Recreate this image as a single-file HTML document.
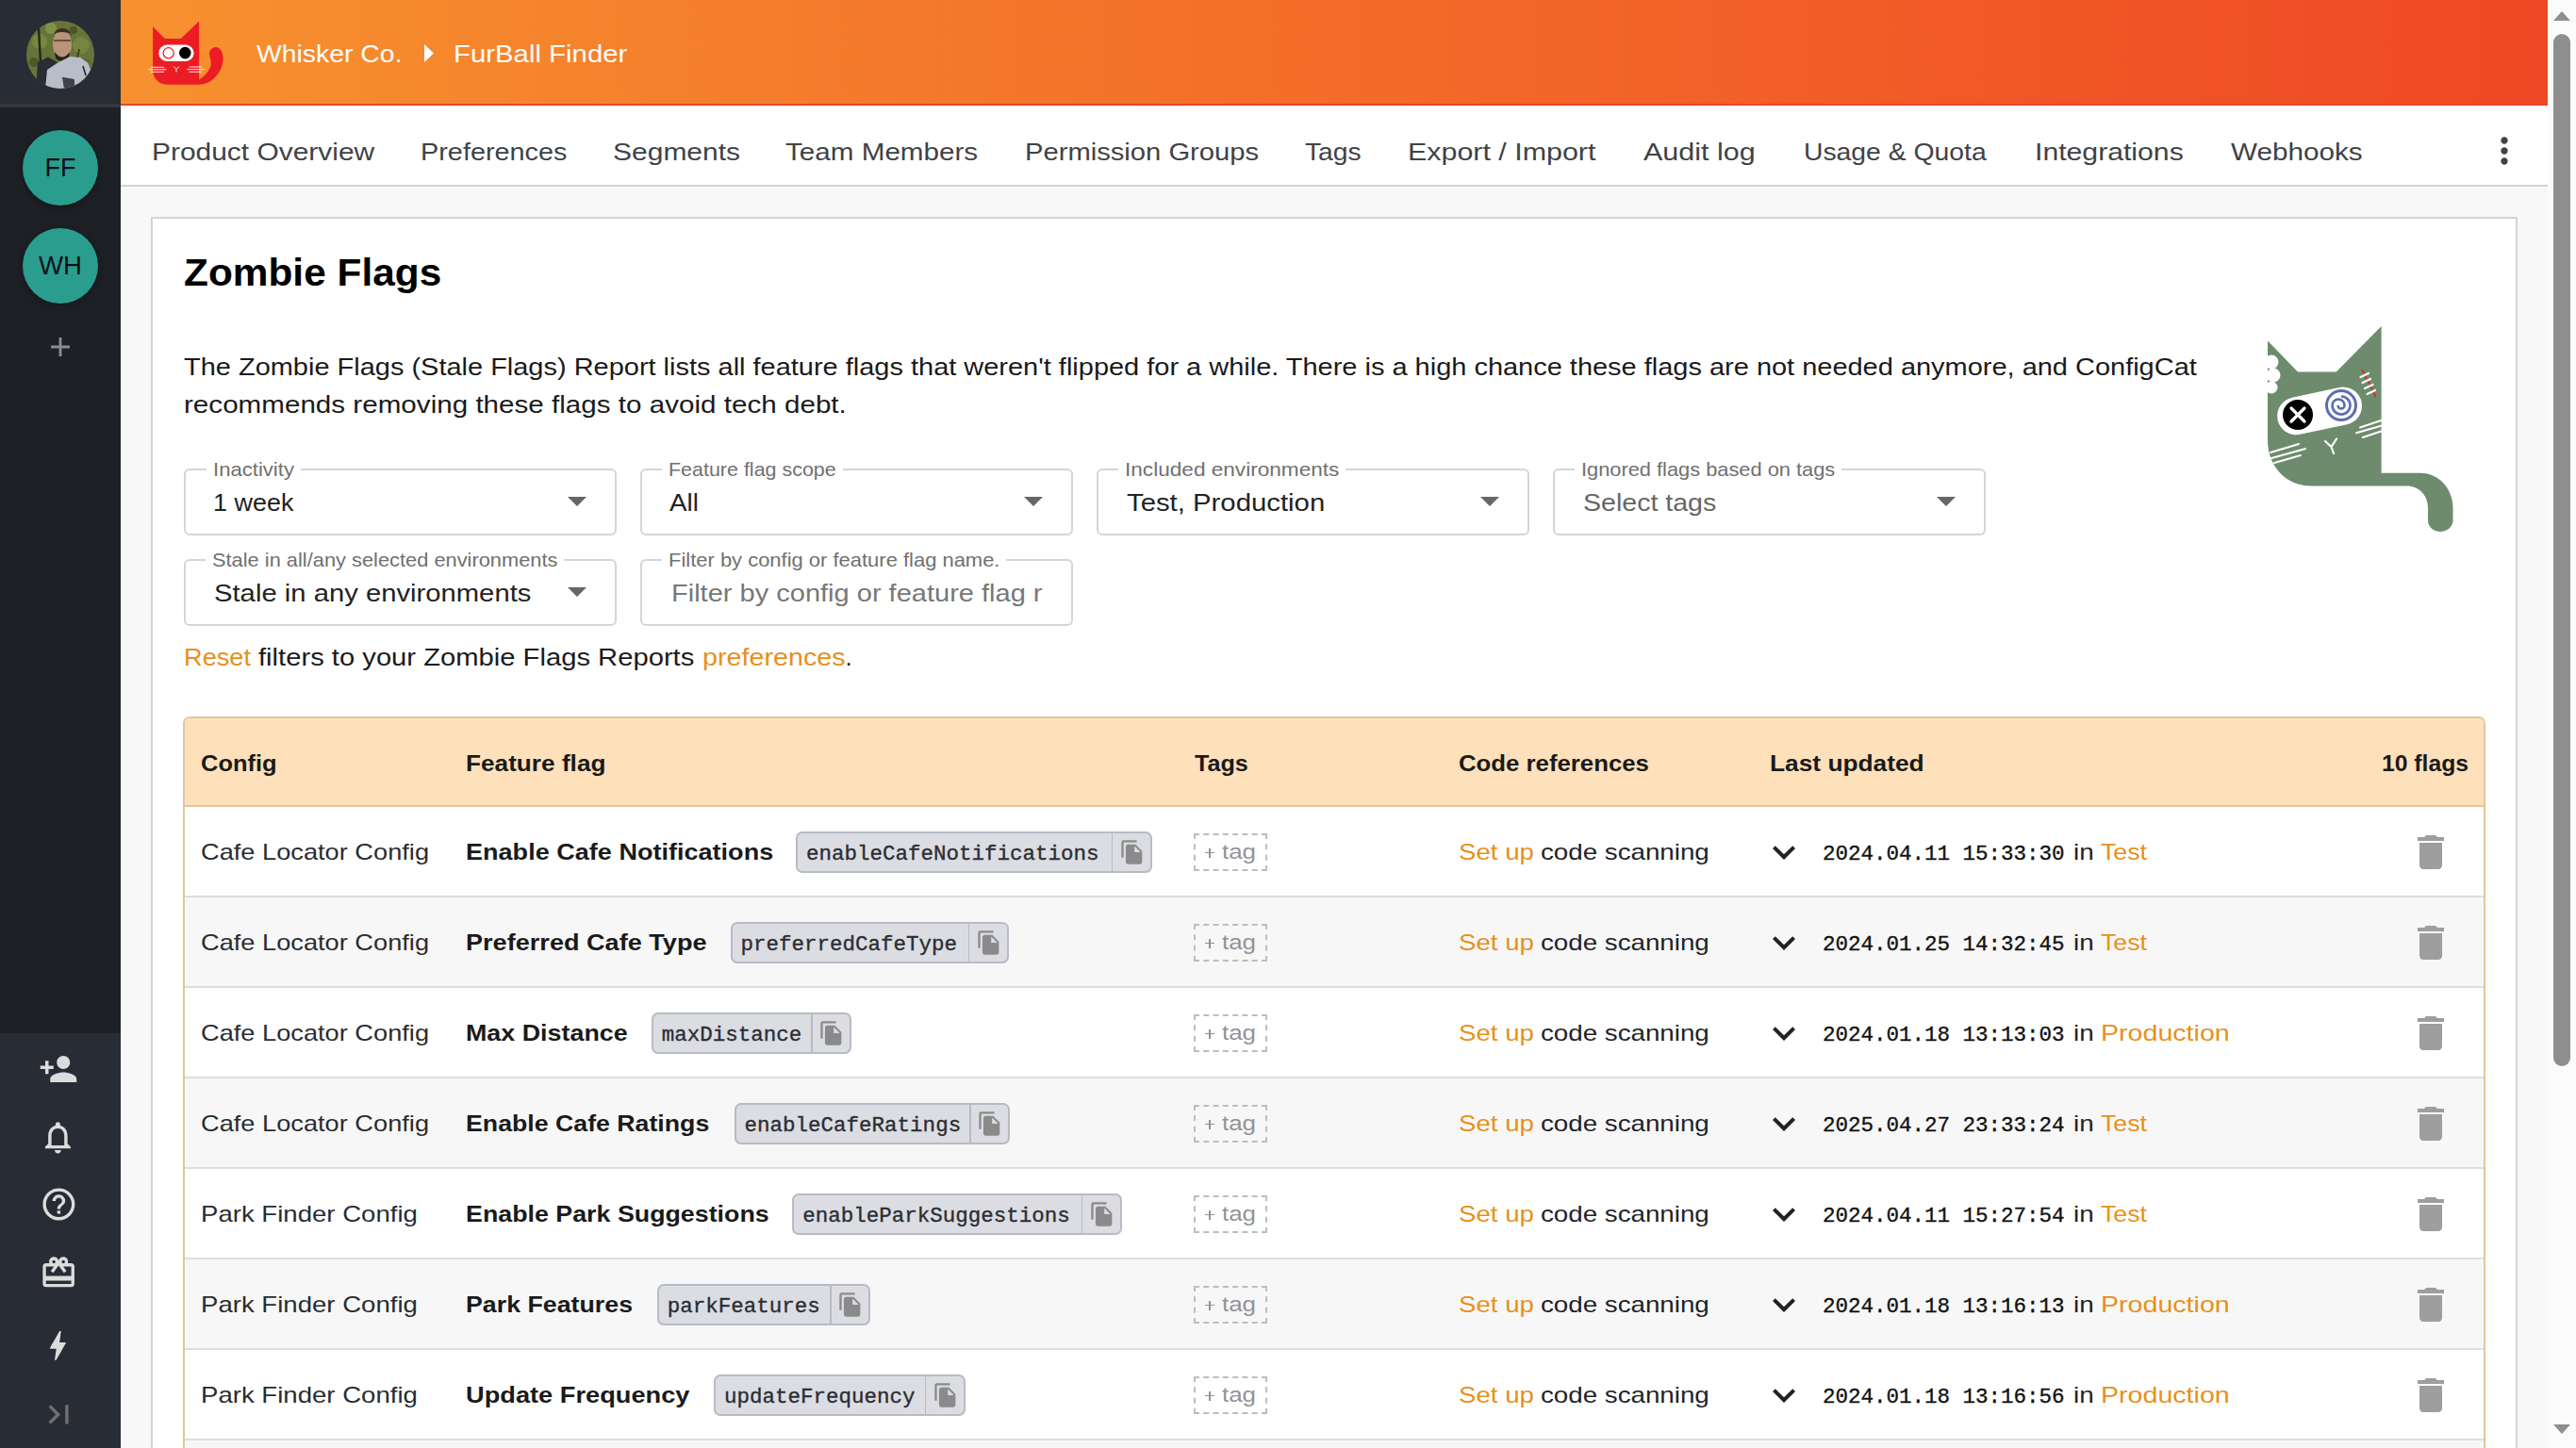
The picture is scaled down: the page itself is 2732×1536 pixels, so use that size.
<!DOCTYPE html>
<html><head><meta charset="utf-8"><title>Zombie Flags</title>
<style>
html,body{margin:0;padding:0;}
body{width:2732px;height:1536px;overflow:hidden;position:relative;background:#f8f8f8;font-family:'Liberation Sans', sans-serif;}
.abs{position:absolute;box-sizing:content-box;}
.ic{position:absolute;display:block;overflow:visible;}
.t{position:absolute;white-space:nowrap;transform-origin:0 0;}
.m{-webkit-text-stroke:0.35px currentColor;}
.circ{border-radius:50%;background:#2a9d8f;box-shadow:0 2px 8px rgba(0,0,0,.35);}
.box{border:2px solid #d3d5d9;border-radius:6px;background:#fff;}
.chip{border:2px solid #b6bbc6;border-radius:7px;background:#dcdde2;}
.tagbox{border:2px dashed #b9bdc7;}
</style></head>
<body>
<div class="abs" style="left:0;top:0;width:128px;height:1536px;background:#1d2025"></div>
<div class="abs" style="left:0;top:0;width:128px;height:110px;background:#282c35"></div>
<div class="abs" style="left:0;top:110px;width:128px;height:4px;background:#34373d"></div>
<div class="abs" style="left:0;top:1096px;width:128px;height:440px;background:#282c34"></div>
<svg class="ic" style="left:28px;top:22px;width:72px;height:72px" viewBox="0 0 72 72">
<defs><clipPath id="avc"><circle cx="36" cy="36" r="36"/></clipPath></defs>
<g clip-path="url(#avc)">
<rect width="72" height="72" fill="#66743a"/>
<circle cx="14" cy="22" r="8" fill="#7d8c45" opacity=".8"/>
<circle cx="58" cy="26" r="9" fill="#7a8a44" opacity=".8"/>
<circle cx="26" cy="8" r="6" fill="#87974c" opacity=".8"/>
<circle cx="62" cy="46" r="6" fill="#5a6a30" opacity=".9"/>
<circle cx="8" cy="44" r="5" fill="#4a5428" opacity=".9"/>
<circle cx="50" cy="10" r="4" fill="#3f4a22" opacity=".7"/>
<path d="M13 8 L15 44" stroke="#2a2418" stroke-width="2.4"/>
<path d="M56 30 L52 48" stroke="#3a3224" stroke-width="1.6"/>
<ellipse cx="38" cy="25" rx="10" ry="15.5" fill="#b89478"/>
<path d="M27.5 18 Q30 8 38 8 Q47 8 48.5 18 L47 14 Q38 10 29 14z" fill="#3e2c22"/>
<path d="M29 21 H47" stroke="#4a3a30" stroke-width="1.4"/>
<path d="M30 33 Q38 44 46 33 L45 40 Q38 46 31 40z" fill="#2a201c"/>
<path d="M12 44 L23 38.5 L33 44 L24 51 L22 72 L10 72z" fill="#2a2c33"/>
<path d="M20 72 L22 52 L35.4 43.5 L46 37.9 L57.2 39 L65.3 44.7 L68.4 52.8 L62 64.6 L54 70 L37.9 72.7z" fill="#b9bdc9"/>
<path d="M37.9 59.7 L51 62 L51 72 L40 72z" fill="#2a2c34" opacity=".85"/>
<path d="M60 48 L63 58" stroke="#1a1c24" stroke-width="1.5"/>
</g></svg>
<div class="abs circ" style="left:24px;top:138px;width:80px;height:80px;"></div>
<div class="abs circ" style="left:24px;top:242px;width:80px;height:80px;"></div>
<svg class="ic" style="left:47.00px;top:351.00px;width:34.00px;height:34.00px" viewBox="0 0 24 24"><path fill="#8a8d92" d="M19 13h-6v6h-2v-6H5v-2h6V5h2v6h6v2z"/></svg>
<svg class="ic" style="left:41.25px;top:1113.00px;width:42.00px;height:42.00px" viewBox="0 0 24 24"><path fill="#dcdcdc" d="M15 12c2.21 0 4-1.79 4-4s-1.79-4-4-4-4 1.790-4 4 1.79 4 4 4zm-9-2V7H4v3H1v2h3v3h2v-3h3v-2H6zm9 4c-2.67 0-8 1.34-8 4v2h16v-2c0-2.66-5.33-4-8-4z"/></svg>
<svg class="ic" style="left:41.20px;top:1185.80px;width:40.80px;height:40.80px" viewBox="0 0 24 24"><path fill="#dcdcdc" d="M12 22c1.1 0 2-.9 2-2h-4c0 1.1.89 2 2 2zm6-6v-5c0-3.07-1.64-5.64-4.5-6.32V4c0-.83-.67-1.5-1.5-1.5s-1.5.67-1.5 1.5v.68C7.630 5.36 6 7.92 6 11v5l-2 2v1h16v-1l-2-2zm-2 1H8v-6c0-2.48 1.51-4.5 4-4.5s4 2.02 4 4.5v6z"/></svg>
<svg class="ic" style="left:42.30px;top:1257.20px;width:40.80px;height:40.80px" viewBox="0 0 24 24"><path fill="#dcdcdc" d="M11 18h2v-2h-2v2zm1-16C6.48 2 2 6.48 2 12s4.48 10 10 10 10-4.48 10-10S17.52 2 12 2zm0 18c-4.41 0-8-3.59-8-8s3.59-8 8-8 8 3.59 8 8-3.59 8-8 8zm0-14c-2.21 0-4 1.79-4 4h2c0-1.1.9-2 2-2s2 .9 2 2c0 2-3 1.75-3 5h2c0-2.25 3-2.5 3-5 0-2.21-1.79-4-4-4z"/></svg>
<svg class="ic" style="left:41.80px;top:1329.60px;width:40.30px;height:40.30px" viewBox="0 0 24 24"><path fill="#dcdcdc" d="M20 6h-2.18c.11-.31.18-.65.18-1 0-1.66-1.34-3-3-3-1.05 0-1.96.54-2.5 1.35l-.5.67-.5-.68C10.96 2.54 10.05 2 9 2 7.34 2 6 3.34 6 5c0 .35.07.69.18 1H4c-1.11 0-1.99.89-1.99 2L2 19c0 1.11.89 2 2 2h16c1.11 0 2-.89 2-2V8c0-1.11-.89-2-2-2zm-5-2c.55 0 1 .45 1 1s-.45 1-1 1-1-.45-1-1 .45-1 1-1zM9 4c.55 0 1 .45 1 1s-.45 1-1 1-1-.45-1-1 .45-1 1-1zm11 15H4v-2h16v2zm0-5H4V8h5.08L7 10.83 8.62 12 11 8.76l1-1.36 1 1.36L15.38 12 17 10.83 14.92 8H20v6z"/></svg>
<svg class="ic" style="left:41.40px;top:1407.40px;width:40.80px;height:40.80px" viewBox="0 0 24 24"><path fill="#dcdcdc" d="M11 21h-1l1-7H7.5c-.58 0-.57-.32-.38-.66.19-.34.05-.08.07-.12C8.48 10.94 10.42 7.54 13 3h1l-1 7h3.5c.49 0 .56.33.47.51l-.07.15C12.96 17.55 11 21 11 21z"/></svg>
<svg class="ic" style="left:41.50px;top:1479.80px;width:40.80px;height:40.80px" viewBox="0 0 24 24"><path fill="#6f7072" d="M5.59 7.41L10.18 12l-4.59 4.59L7 18l6-6-6-6zM16 6h2v12h-2z"/></svg>
<div class="abs" style="left:128px;top:0;width:2574px;height:110px;background:linear-gradient(90deg,#f7912f 0%,#f36c29 50%,#ef4824 100%)"></div>
<div class="abs" style="left:128px;top:110px;width:2574px;height:2px;background:#e9452a"></div>
<svg class="ic" style="left:140px;top:10px;width:140px;height:100px" viewBox="0 0 140 100">
<path fill="#ec1c24" d="M22.1 18.3 L34.9 31 L51.8 31 L71.1 12.4 L71.1 74.6 C78 70 82.5 64 83.8 58.7 C84.2 54 82 50 82 47 C82.5 42 86 40 89 40 C93 40 96.7 45 96.7 51.8 C96.7 60 93 68 86 74 C80 79 74 79.8 70 79.8 L37.3 79.8 C28 79.8 22.1 72 22.1 65.6 Z"/>
<rect x="28.3" y="37.6" width="37.3" height="17.3" rx="8.65" fill="#fff"/>
<circle cx="38.7" cy="46.3" r="5.6" fill="#fff" stroke="#ec1c24" stroke-width="1.3"/>
<circle cx="56.3" cy="46.1" r="6.3" fill="#000"/>
<path d="M44 60.5 L47 63.5 L50 60.5 M47 63.5 L47 66.5" stroke="#fff" stroke-width="1" fill="none"/>
<path d="M20 61.3 H34 M17.3 63.8 H36.3 M20 66.3 H34 M60.5 61 H74 M58 63.6 H76.7 M60.5 66.2 H74" stroke="#fff" stroke-width=".9"/>
</svg>
<svg class="ic" style="left:449px;top:47px;width:12px;height:19px" viewBox="0 0 12 19"><path d="M1 0 L11 9.5 L1 19z" fill="#fff"/></svg>
<div class="abs" style="left:128px;top:112px;width:2574px;height:84px;background:#fff"></div>
<div class="abs" style="left:128px;top:196px;width:2574px;height:2px;background:#d2d2d2"></div>
<svg class="ic" style="left:2634.00px;top:138.40px;width:44.00px;height:44.00px" viewBox="0 0 24 24"><path fill="#3f434a" d="M12 8c1.1 0 2-.9 2-2s-.9-2-2-2-2 .9-2 2 .9 2 2 2zm0 2c-1.1 0-2 .9-2 2s.9 2 2 2 2-.9 2-2-.9-2-2-2zm0 6c-1.1 0-2 .9-2 2s.9 2 2 2 2-.9 2-2-.9-2-2-2z"/></svg>
<div class="abs" style="left:2702px;top:0;width:30px;height:1536px;background:#fbfbfc"></div>
<div class="abs" style="left:2708px;top:36px;width:18px;height:1095px;background:#8e8e8e;border-radius:9px"></div>
<svg class="ic" style="left:2708px;top:12px;width:18px;height:10px" viewBox="0 0 18 10"><path d="M9 0 L18 10 L0 10z" fill="#8e8e8e"/></svg>
<svg class="ic" style="left:2708px;top:1511px;width:18px;height:10px" viewBox="0 0 18 10"><path d="M0 0 L18 0 L9 10z" fill="#8e8e8e"/></svg>
<div class="abs" style="left:160px;top:230px;width:2506px;height:1400px;background:#fff;border:2px solid #d4d4d4"></div>
<svg class="ic" style="left:2350px;top:320px;width:300px;height:280px" viewBox="0 0 300 280">
<path fill="#6e8c6d" d="M55 41.6 L87 74.5 L127.7 74.5 L175.6 26 L175.6 181.8 L216.6 181.8 C238 181.8 251.5 200 251.5 218.6 L251.5 232 C251.5 239 245 244 238 244 C231 244 225 239 225 232 L225 218.6 C225 205 215 195.4 203 195.4 L100.6 195.4 C75 195.4 55 175 55 147 Z"/>
<circle cx="59" cy="64" r="7.5" fill="#fff"/><circle cx="61" cy="78" r="7.5" fill="#fff"/><circle cx="59" cy="91" r="6.5" fill="#fff"/>
<rect x="0" y="41" width="55" height="70" fill="#fff"/>
<g transform="rotate(-12 109.7 115.5)"><rect x="64.5" y="96" width="91" height="40" rx="20" fill="#fff"/></g>
<circle cx="87" cy="120" r="16" fill="#000"/>
<path d="M80 113 L94 127 M94 113 L80 127" stroke="#fff" stroke-width="3.2" stroke-linecap="round"/>
<circle cx="133" cy="110" r="15.5" fill="none" stroke="#5a6eb0" stroke-width="3"/>
<path d="M133 100.5 A9.5 9.5 0 1 1 123.5 110 A6.5 6.5 0 0 1 136.5 110 A3.5 3.5 0 0 1 129.5 110" fill="none" stroke="#5a6eb0" stroke-width="2.6"/>
<path d="M155 72 L170 101.5" stroke="#e02020" stroke-width="1.6"/>
<path d="M153.5 80 L162 76 M155.5 86 L164 82 M158 92 L166.5 88 M160.5 98 L169 94" stroke="#fff" stroke-width="2.2" stroke-linecap="round"/>
<path d="M153 133.5 L176 125.7 M149 139.3 L176 131.5 M155.7 144 L176 137.3" stroke="#fff" stroke-width="2" stroke-linecap="round"/>
<path d="M58 160 L88 151 M59 166 L95 156 M62 171 L90 163" stroke="#fff" stroke-width="2" stroke-linecap="round"/>
<path d="M116 148 L122.5 154 L128 145.5 M122.5 154 L125 161" stroke="#fff" stroke-width="2.2" fill="none" stroke-linecap="round"/>
</svg>
<div class="abs box" style="left:195px;top:497px;width:455px;height:67px"></div>
<div class="abs" style="left:218.7px;top:495px;width:100.30000000000001px;height:4px;background:#fff"></div>
<svg class="ic" style="left:588.00px;top:507.00px;width:48.00px;height:48.00px" viewBox="0 0 24 24"><path fill="#666" d="M7 10l5 5 5-5z"/></svg>
<div class="abs box" style="left:679px;top:497px;width:455px;height:67px"></div>
<div class="abs" style="left:702px;top:495px;width:191.79999999999995px;height:4px;background:#fff"></div>
<svg class="ic" style="left:1072.00px;top:507.00px;width:48.00px;height:48.00px" viewBox="0 0 24 24"><path fill="#666" d="M7 10l5 5 5-5z"/></svg>
<div class="abs box" style="left:1163px;top:497px;width:455px;height:67px"></div>
<div class="abs" style="left:1185.7px;top:495px;width:241.0999999999999px;height:4px;background:#fff"></div>
<svg class="ic" style="left:1556.00px;top:507.00px;width:48.00px;height:48.00px" viewBox="0 0 24 24"><path fill="#666" d="M7 10l5 5 5-5z"/></svg>
<div class="abs box" style="left:1647px;top:497px;width:455px;height:67px"></div>
<div class="abs" style="left:1669.8px;top:495px;width:283.0px;height:4px;background:#fff"></div>
<svg class="ic" style="left:2040.00px;top:507.00px;width:48.00px;height:48.00px" viewBox="0 0 24 24"><path fill="#666" d="M7 10l5 5 5-5z"/></svg>
<div class="abs box" style="left:195px;top:593px;width:455px;height:67px"></div>
<div class="abs" style="left:217.5px;top:591px;width:380.9px;height:4px;background:#fff"></div>
<svg class="ic" style="left:588.00px;top:603.00px;width:48.00px;height:48.00px" viewBox="0 0 24 24"><path fill="#666" d="M7 10l5 5 5-5z"/></svg>
<div class="abs box" style="left:679px;top:593px;width:455px;height:67px"></div>
<div class="abs" style="left:702px;top:591px;width:365.29999999999995px;height:4px;background:#fff"></div>
<div class="abs" style="left:194px;top:760px;width:2438px;height:900px;border:2px solid #e3c69c;border-radius:7px;background:#fff"></div>
<div class="abs" style="left:196px;top:762px;width:2438px;height:92px;background:#fee0bb;border-radius:5px 5px 0 0"></div>
<div class="abs" style="left:196px;top:854px;width:2438px;height:2px;background:#e3c69c"></div>
<div class="abs" style="left:196px;top:856px;width:2438px;height:94px;background:#fff"></div>
<div class="abs" style="left:196px;top:950px;width:2438px;height:2px;background:#dedede"></div>
<div class="abs" style="left:196px;top:952px;width:2438px;height:94px;background:#f7f7f7"></div>
<div class="abs" style="left:196px;top:1046px;width:2438px;height:2px;background:#dedede"></div>
<div class="abs" style="left:196px;top:1048px;width:2438px;height:94px;background:#fff"></div>
<div class="abs" style="left:196px;top:1142px;width:2438px;height:2px;background:#dedede"></div>
<div class="abs" style="left:196px;top:1144px;width:2438px;height:94px;background:#f7f7f7"></div>
<div class="abs" style="left:196px;top:1238px;width:2438px;height:2px;background:#dedede"></div>
<div class="abs" style="left:196px;top:1240px;width:2438px;height:94px;background:#fff"></div>
<div class="abs" style="left:196px;top:1334px;width:2438px;height:2px;background:#dedede"></div>
<div class="abs" style="left:196px;top:1336px;width:2438px;height:94px;background:#f7f7f7"></div>
<div class="abs" style="left:196px;top:1430px;width:2438px;height:2px;background:#dedede"></div>
<div class="abs" style="left:196px;top:1432px;width:2438px;height:94px;background:#fff"></div>
<div class="abs" style="left:196px;top:1526px;width:2438px;height:2px;background:#dedede"></div>
<div class="abs" style="left:196px;top:1528px;width:2438px;height:94px;background:#f7f7f7"></div>
<div class="abs" style="left:196px;top:1622px;width:2438px;height:2px;background:#dedede"></div>
<div class="abs chip" style="left:844.0px;top:882.2px;width:373.6px;height:39.4px"></div>
<div class="abs" style="left:1178.6px;top:884.2px;width:1.8px;height:39.4px;background:#b6bbc6"></div>
<svg class="ic" style="left:1186.60px;top:889.90px;width:27.80px;height:27.80px" viewBox="0 0 24 24"><path fill="#8a8a8a" d="M16 1H4c-1.1 0-2 .9-2 2v14h2V3h12V1zm-1 4l6 6v10c0 1.1-.9 2-2 2H7.99C6.89 23 6 22.1 6 21l.01-14c0-1.1.89-2 1.99-2h7zm-1 7h5.5L14 6.5V12z"/></svg>
<div class="abs tagbox" style="left:1266px;top:884px;width:74px;height:36px"></div>
<div class="abs" style="left:1278px;top:903.5px;width:10px;height:1.6px;background:#939393"></div>
<div class="abs" style="left:1282.2px;top:899.5px;width:1.6px;height:10px;background:#939393"></div>
<svg class="ic" style="left:1868.00px;top:880.20px;width:48.00px;height:48.00px" viewBox="0 0 24 24"><path fill="#222" d="M16.59 8.59L12 13.17 7.41 8.59 6 10l6 6 6-6z"/></svg>
<svg class="ic" style="left:2554.00px;top:880.00px;width:48.00px;height:48.00px" viewBox="0 0 24 24"><path fill="#9e9e9e" d="M6 19c0 1.1.9 2 2 2h8c1.1 0 2-.9 2-2V7H6v12zM19 4h-3.5l-1-1h-5l-1 1H5v2h14V4z"/></svg>
<div class="abs chip" style="left:774.5px;top:978.2px;width:291.0px;height:39.4px"></div>
<div class="abs" style="left:1026.5px;top:980.2px;width:1.8px;height:39.4px;background:#b6bbc6"></div>
<svg class="ic" style="left:1034.50px;top:985.90px;width:27.80px;height:27.80px" viewBox="0 0 24 24"><path fill="#8a8a8a" d="M16 1H4c-1.1 0-2 .9-2 2v14h2V3h12V1zm-1 4l6 6v10c0 1.1-.9 2-2 2H7.99C6.89 23 6 22.1 6 21l.01-14c0-1.1.89-2 1.99-2h7zm-1 7h5.5L14 6.5V12z"/></svg>
<div class="abs tagbox" style="left:1266px;top:980px;width:74px;height:36px"></div>
<div class="abs" style="left:1278px;top:999.5px;width:10px;height:1.6px;background:#939393"></div>
<div class="abs" style="left:1282.2px;top:995.5px;width:1.6px;height:10px;background:#939393"></div>
<svg class="ic" style="left:1868.00px;top:976.20px;width:48.00px;height:48.00px" viewBox="0 0 24 24"><path fill="#222" d="M16.59 8.59L12 13.17 7.41 8.59 6 10l6 6 6-6z"/></svg>
<svg class="ic" style="left:2554.00px;top:976.00px;width:48.00px;height:48.00px" viewBox="0 0 24 24"><path fill="#9e9e9e" d="M6 19c0 1.1.9 2 2 2h8c1.1 0 2-.9 2-2V7H6v12zM19 4h-3.5l-1-1h-5l-1 1H5v2h14V4z"/></svg>
<div class="abs chip" style="left:690.7px;top:1074.2px;width:208.7px;height:39.4px"></div>
<div class="abs" style="left:860.4px;top:1076.2px;width:1.8px;height:39.4px;background:#b6bbc6"></div>
<svg class="ic" style="left:868.40px;top:1081.90px;width:27.80px;height:27.80px" viewBox="0 0 24 24"><path fill="#8a8a8a" d="M16 1H4c-1.1 0-2 .9-2 2v14h2V3h12V1zm-1 4l6 6v10c0 1.1-.9 2-2 2H7.99C6.89 23 6 22.1 6 21l.01-14c0-1.1.89-2 1.99-2h7zm-1 7h5.5L14 6.5V12z"/></svg>
<div class="abs tagbox" style="left:1266px;top:1076px;width:74px;height:36px"></div>
<div class="abs" style="left:1278px;top:1095.5px;width:10px;height:1.6px;background:#939393"></div>
<div class="abs" style="left:1282.2px;top:1091.5px;width:1.6px;height:10px;background:#939393"></div>
<svg class="ic" style="left:1868.00px;top:1072.20px;width:48.00px;height:48.00px" viewBox="0 0 24 24"><path fill="#222" d="M16.59 8.59L12 13.17 7.41 8.59 6 10l6 6 6-6z"/></svg>
<svg class="ic" style="left:2554.00px;top:1072.00px;width:48.00px;height:48.00px" viewBox="0 0 24 24"><path fill="#9e9e9e" d="M6 19c0 1.1.9 2 2 2h8c1.1 0 2-.9 2-2V7H6v12zM19 4h-3.5l-1-1h-5l-1 1H5v2h14V4z"/></svg>
<div class="abs chip" style="left:778.6px;top:1170.2px;width:288.4px;height:39.4px"></div>
<div class="abs" style="left:1028.0px;top:1172.2px;width:1.8px;height:39.4px;background:#b6bbc6"></div>
<svg class="ic" style="left:1036.00px;top:1177.90px;width:27.80px;height:27.80px" viewBox="0 0 24 24"><path fill="#8a8a8a" d="M16 1H4c-1.1 0-2 .9-2 2v14h2V3h12V1zm-1 4l6 6v10c0 1.1-.9 2-2 2H7.99C6.89 23 6 22.1 6 21l.01-14c0-1.1.89-2 1.99-2h7zm-1 7h5.5L14 6.5V12z"/></svg>
<div class="abs tagbox" style="left:1266px;top:1172px;width:74px;height:36px"></div>
<div class="abs" style="left:1278px;top:1191.5px;width:10px;height:1.6px;background:#939393"></div>
<div class="abs" style="left:1282.2px;top:1187.5px;width:1.6px;height:10px;background:#939393"></div>
<svg class="ic" style="left:1868.00px;top:1168.20px;width:48.00px;height:48.00px" viewBox="0 0 24 24"><path fill="#222" d="M16.59 8.59L12 13.17 7.41 8.59 6 10l6 6 6-6z"/></svg>
<svg class="ic" style="left:2554.00px;top:1168.00px;width:48.00px;height:48.00px" viewBox="0 0 24 24"><path fill="#9e9e9e" d="M6 19c0 1.1.9 2 2 2h8c1.1 0 2-.9 2-2V7H6v12zM19 4h-3.5l-1-1h-5l-1 1H5v2h14V4z"/></svg>
<div class="abs chip" style="left:840.2px;top:1266.2px;width:345.4px;height:39.4px"></div>
<div class="abs" style="left:1146.6px;top:1268.2px;width:1.8px;height:39.4px;background:#b6bbc6"></div>
<svg class="ic" style="left:1154.60px;top:1273.90px;width:27.80px;height:27.80px" viewBox="0 0 24 24"><path fill="#8a8a8a" d="M16 1H4c-1.1 0-2 .9-2 2v14h2V3h12V1zm-1 4l6 6v10c0 1.1-.9 2-2 2H7.99C6.89 23 6 22.1 6 21l.01-14c0-1.1.89-2 1.99-2h7zm-1 7h5.5L14 6.5V12z"/></svg>
<div class="abs tagbox" style="left:1266px;top:1268px;width:74px;height:36px"></div>
<div class="abs" style="left:1278px;top:1287.5px;width:10px;height:1.6px;background:#939393"></div>
<div class="abs" style="left:1282.2px;top:1283.5px;width:1.6px;height:10px;background:#939393"></div>
<svg class="ic" style="left:1868.00px;top:1264.20px;width:48.00px;height:48.00px" viewBox="0 0 24 24"><path fill="#222" d="M16.59 8.59L12 13.17 7.41 8.59 6 10l6 6 6-6z"/></svg>
<svg class="ic" style="left:2554.00px;top:1264.00px;width:48.00px;height:48.00px" viewBox="0 0 24 24"><path fill="#9e9e9e" d="M6 19c0 1.1.9 2 2 2h8c1.1 0 2-.9 2-2V7H6v12zM19 4h-3.5l-1-1h-5l-1 1H5v2h14V4z"/></svg>
<div class="abs chip" style="left:696.8px;top:1362.2px;width:222.4px;height:39.4px"></div>
<div class="abs" style="left:880.2px;top:1364.2px;width:1.8px;height:39.4px;background:#b6bbc6"></div>
<svg class="ic" style="left:888.20px;top:1369.90px;width:27.80px;height:27.80px" viewBox="0 0 24 24"><path fill="#8a8a8a" d="M16 1H4c-1.1 0-2 .9-2 2v14h2V3h12V1zm-1 4l6 6v10c0 1.1-.9 2-2 2H7.99C6.89 23 6 22.1 6 21l.01-14c0-1.1.89-2 1.99-2h7zm-1 7h5.5L14 6.5V12z"/></svg>
<div class="abs tagbox" style="left:1266px;top:1364px;width:74px;height:36px"></div>
<div class="abs" style="left:1278px;top:1383.5px;width:10px;height:1.6px;background:#939393"></div>
<div class="abs" style="left:1282.2px;top:1379.5px;width:1.6px;height:10px;background:#939393"></div>
<svg class="ic" style="left:1868.00px;top:1360.20px;width:48.00px;height:48.00px" viewBox="0 0 24 24"><path fill="#222" d="M16.59 8.59L12 13.17 7.41 8.59 6 10l6 6 6-6z"/></svg>
<svg class="ic" style="left:2554.00px;top:1360.00px;width:48.00px;height:48.00px" viewBox="0 0 24 24"><path fill="#9e9e9e" d="M6 19c0 1.1.9 2 2 2h8c1.1 0 2-.9 2-2V7H6v12zM19 4h-3.5l-1-1h-5l-1 1H5v2h14V4z"/></svg>
<div class="abs chip" style="left:757.0px;top:1458.2px;width:262.5px;height:39.4px"></div>
<div class="abs" style="left:980.5px;top:1460.2px;width:1.8px;height:39.4px;background:#b6bbc6"></div>
<svg class="ic" style="left:988.50px;top:1465.90px;width:27.80px;height:27.80px" viewBox="0 0 24 24"><path fill="#8a8a8a" d="M16 1H4c-1.1 0-2 .9-2 2v14h2V3h12V1zm-1 4l6 6v10c0 1.1-.9 2-2 2H7.99C6.89 23 6 22.1 6 21l.01-14c0-1.1.89-2 1.99-2h7zm-1 7h5.5L14 6.5V12z"/></svg>
<div class="abs tagbox" style="left:1266px;top:1460px;width:74px;height:36px"></div>
<div class="abs" style="left:1278px;top:1479.5px;width:10px;height:1.6px;background:#939393"></div>
<div class="abs" style="left:1282.2px;top:1475.5px;width:1.6px;height:10px;background:#939393"></div>
<svg class="ic" style="left:1868.00px;top:1456.20px;width:48.00px;height:48.00px" viewBox="0 0 24 24"><path fill="#222" d="M16.59 8.59L12 13.17 7.41 8.59 6 10l6 6 6-6z"/></svg>
<svg class="ic" style="left:2554.00px;top:1456.00px;width:48.00px;height:48.00px" viewBox="0 0 24 24"><path fill="#9e9e9e" d="M6 19c0 1.1.9 2 2 2h8c1.1 0 2-.9 2-2V7H6v12zM19 4h-3.5l-1-1h-5l-1 1H5v2h14V4z"/></svg>
<div class="abs chip" style="left:785.0px;top:1554.2px;width:276.0px;height:39.4px"></div>
<div class="abs" style="left:1022.0px;top:1556.2px;width:1.8px;height:39.4px;background:#b6bbc6"></div>
<svg class="ic" style="left:1030.00px;top:1561.90px;width:27.80px;height:27.80px" viewBox="0 0 24 24"><path fill="#8a8a8a" d="M16 1H4c-1.1 0-2 .9-2 2v14h2V3h12V1zm-1 4l6 6v10c0 1.1-.9 2-2 2H7.99C6.89 23 6 22.1 6 21l.01-14c0-1.1.89-2 1.99-2h7zm-1 7h5.5L14 6.5V12z"/></svg>
<div class="abs tagbox" style="left:1266px;top:1556px;width:74px;height:36px"></div>
<div class="abs" style="left:1278px;top:1575.5px;width:10px;height:1.6px;background:#939393"></div>
<div class="abs" style="left:1282.2px;top:1571.5px;width:1.6px;height:10px;background:#939393"></div>
<svg class="ic" style="left:1868.00px;top:1552.20px;width:48.00px;height:48.00px" viewBox="0 0 24 24"><path fill="#222" d="M16.59 8.59L12 13.17 7.41 8.59 6 10l6 6 6-6z"/></svg>
<svg class="ic" style="left:2554.00px;top:1552.00px;width:48.00px;height:48.00px" viewBox="0 0 24 24"><path fill="#9e9e9e" d="M6 19c0 1.1.9 2 2 2h8c1.1 0 2-.9 2-2V7H6v12zM19 4h-3.5l-1-1h-5l-1 1H5v2h14V4z"/></svg>
<span class="t" id="t_bc1" style="left:272.0px;top:44.29px;font-size:26px;line-height:26px;font-weight:400;color:#fff;font-family:'Liberation Sans', sans-serif;transform:scaleX(1.0915);">Whisker Co.</span>
<span class="t" id="t_bc2" style="left:480.6px;top:44.29px;font-size:26px;line-height:26px;font-weight:400;color:#fff;font-family:'Liberation Sans', sans-serif;transform:scaleX(1.1288);">FurBall Finder</span>
<span class="t" id="t_nav0" style="left:161.0px;top:148.29px;font-size:26px;line-height:26px;font-weight:400;color:#404246;font-family:'Liberation Sans', sans-serif;transform:scaleX(1.1512);">Product Overview</span>
<span class="t" id="t_nav1" style="left:446.4px;top:148.29px;font-size:26px;line-height:26px;font-weight:400;color:#404246;font-family:'Liberation Sans', sans-serif;transform:scaleX(1.1093);">Preferences</span>
<span class="t" id="t_nav2" style="left:650.0px;top:148.29px;font-size:26px;line-height:26px;font-weight:400;color:#404246;font-family:'Liberation Sans', sans-serif;transform:scaleX(1.1538);">Segments</span>
<span class="t" id="t_nav3" style="left:833.0px;top:148.29px;font-size:26px;line-height:26px;font-weight:400;color:#404246;font-family:'Liberation Sans', sans-serif;transform:scaleX(1.1397);">Team Members</span>
<span class="t" id="t_nav4" style="left:1087.0px;top:148.29px;font-size:26px;line-height:26px;font-weight:400;color:#404246;font-family:'Liberation Sans', sans-serif;transform:scaleX(1.1222);">Permission Groups</span>
<span class="t" id="t_nav5" style="left:1384.0px;top:148.29px;font-size:26px;line-height:26px;font-weight:400;color:#404246;font-family:'Liberation Sans', sans-serif;transform:scaleX(1.0855);">Tags</span>
<span class="t" id="t_nav6" style="left:1493.4px;top:148.29px;font-size:26px;line-height:26px;font-weight:400;color:#404246;font-family:'Liberation Sans', sans-serif;transform:scaleX(1.1696);">Export / Import</span>
<span class="t" id="t_nav7" style="left:1743.0px;top:148.29px;font-size:26px;line-height:26px;font-weight:400;color:#404246;font-family:'Liberation Sans', sans-serif;transform:scaleX(1.1723);">Audit log</span>
<span class="t" id="t_nav8" style="left:1912.8px;top:148.29px;font-size:26px;line-height:26px;font-weight:400;color:#404246;font-family:'Liberation Sans', sans-serif;transform:scaleX(1.0893);">Usage &amp; Quota</span>
<span class="t" id="t_nav9" style="left:2157.6px;top:148.29px;font-size:26px;line-height:26px;font-weight:400;color:#404246;font-family:'Liberation Sans', sans-serif;transform:scaleX(1.1610);">Integrations</span>
<span class="t" id="t_nav10" style="left:2365.5px;top:148.29px;font-size:26px;line-height:26px;font-weight:400;color:#404246;font-family:'Liberation Sans', sans-serif;transform:scaleX(1.1402);">Webhooks</span>
<span class="t" id="t_title" style="left:194.6px;top:269.14px;font-size:40px;line-height:40px;font-weight:700;color:#000;font-family:'Liberation Sans', sans-serif;transform:scaleX(1.0597);">Zombie Flags</span>
<span class="t" id="t_d1" style="left:194.6px;top:375.99px;font-size:26px;line-height:26px;font-weight:400;color:#1a1a1a;font-family:'Liberation Sans', sans-serif;transform:scaleX(1.1139);">The Zombie Flags (Stale Flags) Report lists all feature flags that weren't flipped for a while. There is a high chance these flags are not needed anymore, and ConfigCat</span>
<span class="t" id="t_d2" style="left:194.6px;top:416.49px;font-size:26px;line-height:26px;font-weight:400;color:#1a1a1a;font-family:'Liberation Sans', sans-serif;transform:scaleX(1.1389);">recommends removing these flags to avoid tech debt.</span>
<span class="t" id="t_lab0" style="left:225.7px;top:486.72px;font-size:21px;line-height:21px;font-weight:400;color:#707070;font-family:'Liberation Sans', sans-serif;transform:scaleX(1.0524);">Inactivity</span>
<span class="t" id="t_val0" style="left:226.0px;top:520.49px;font-size:26px;line-height:26px;font-weight:400;color:#222;font-family:'Liberation Sans', sans-serif;transform:scaleX(1.0366);">1 week</span>
<span class="t" id="t_lab1" style="left:709.0px;top:486.72px;font-size:21px;line-height:21px;font-weight:400;color:#707070;font-family:'Liberation Sans', sans-serif;transform:scaleX(1.0218);">Feature flag scope</span>
<span class="t" id="t_val1" style="left:710.0px;top:520.49px;font-size:26px;line-height:26px;font-weight:400;color:#222;font-family:'Liberation Sans', sans-serif;transform:scaleX(1.0690);">All</span>
<span class="t" id="t_lab2" style="left:1192.7px;top:486.72px;font-size:21px;line-height:21px;font-weight:400;color:#707070;font-family:'Liberation Sans', sans-serif;transform:scaleX(1.0763);">Included environments</span>
<span class="t" id="t_val2" style="left:1194.6px;top:520.49px;font-size:26px;line-height:26px;font-weight:400;color:#222;font-family:'Liberation Sans', sans-serif;transform:scaleX(1.1274);">Test, Production</span>
<span class="t" id="t_lab3" style="left:1676.8px;top:486.72px;font-size:21px;line-height:21px;font-weight:400;color:#707070;font-family:'Liberation Sans', sans-serif;transform:scaleX(1.0386);">Ignored flags based on tags</span>
<span class="t" id="t_val3" style="left:1678.7px;top:520.49px;font-size:26px;line-height:26px;font-weight:400;color:#666;font-family:'Liberation Sans', sans-serif;transform:scaleX(1.0984);">Select tags</span>
<span class="t" id="t_lab4" style="left:224.5px;top:582.72px;font-size:21px;line-height:21px;font-weight:400;color:#707070;font-family:'Liberation Sans', sans-serif;transform:scaleX(1.0394);">Stale in all/any selected environments</span>
<span class="t" id="t_val4" style="left:226.5px;top:616.49px;font-size:26px;line-height:26px;font-weight:400;color:#222;font-family:'Liberation Sans', sans-serif;transform:scaleX(1.1244);">Stale in any environments</span>
<span class="t" id="t_lab5" style="left:709.0px;top:582.72px;font-size:21px;line-height:21px;font-weight:400;color:#707070;font-family:'Liberation Sans', sans-serif;transform:scaleX(1.0455);">Filter by config or feature flag name.</span>
<span class="t" id="t_val5" style="left:711.7px;top:616.49px;font-size:26px;line-height:26px;font-weight:400;color:#777;font-family:'Liberation Sans', sans-serif;transform:scaleX(1.1161);">Filter by config or feature flag r</span>
<span class="t" id="t_reset1" style="left:195.4px;top:684.49px;font-size:26px;line-height:26px;font-weight:400;color:#e8901a;font-family:'Liberation Sans', sans-serif;transform:scaleX(1.0456);">Reset</span>
<span class="t" id="t_reset2" style="left:273.5px;top:684.49px;font-size:26px;line-height:26px;font-weight:400;color:#1a1a1a;font-family:'Liberation Sans', sans-serif;transform:scaleX(1.1226);">filters to your Zombie Flags Reports</span>
<span class="t" id="t_reset3" style="left:744.7px;top:684.49px;font-size:26px;line-height:26px;font-weight:400;color:#e8901a;font-family:'Liberation Sans', sans-serif;transform:scaleX(1.1044);">preferences</span>
<span class="t" id="t_reset4" style="left:896.5px;top:684.49px;font-size:26px;line-height:26px;font-weight:400;color:#1a1a1a;font-family:'Liberation Sans', sans-serif;">.</span>
<span class="t" id="t_h0" style="left:212.5px;top:798.08px;font-size:24px;line-height:24px;font-weight:700;color:#1a1a1a;font-family:'Liberation Sans', sans-serif;transform:scaleX(1.0618);">Config</span>
<span class="t" id="t_h1" style="left:494.0px;top:798.08px;font-size:24px;line-height:24px;font-weight:700;color:#1a1a1a;font-family:'Liberation Sans', sans-serif;transform:scaleX(1.0912);">Feature flag</span>
<span class="t" id="t_h2" style="left:1267.4px;top:798.08px;font-size:24px;line-height:24px;font-weight:700;color:#1a1a1a;font-family:'Liberation Sans', sans-serif;transform:scaleX(1.0481);">Tags</span>
<span class="t" id="t_h3" style="left:1547.0px;top:798.08px;font-size:24px;line-height:24px;font-weight:700;color:#1a1a1a;font-family:'Liberation Sans', sans-serif;transform:scaleX(1.0734);">Code references</span>
<span class="t" id="t_h4" style="left:1877.0px;top:798.08px;font-size:24px;line-height:24px;font-weight:700;color:#1a1a1a;font-family:'Liberation Sans', sans-serif;transform:scaleX(1.0960);">Last updated</span>
<span class="t" id="t_h5" style="left:2526.0px;top:798.08px;font-size:24px;line-height:24px;font-weight:700;color:#1a1a1a;font-family:'Liberation Sans', sans-serif;transform:scaleX(1.0292);">10 flags</span>
<span class="t" id="t_r0c" style="left:213.0px;top:892.28px;font-size:24px;line-height:24px;font-weight:400;color:#2a2c30;font-family:'Liberation Sans', sans-serif;transform:scaleX(1.1338);">Cafe Locator Config</span>
<span class="t" id="t_r0n" style="left:494.0px;top:892.28px;font-size:24px;line-height:24px;font-weight:700;color:#1a1a1a;font-family:'Liberation Sans', sans-serif;transform:scaleX(1.1273);">Enable Cafe Notifications</span>
<span class="t m" id="t_r0k" style="left:855.0px;top:894.85px;font-size:22.5px;line-height:22.5px;font-weight:400;color:#2a2d33;font-family:'Liberation Mono', monospace;">enableCafeNotifications</span>
<span class="t" id="t_r0tg" style="left:1296.0px;top:893.05px;font-size:22.5px;line-height:22.5px;font-weight:400;color:#939393;font-family:'Liberation Sans', sans-serif;transform:scaleX(1.1516);">tag</span>
<span class="t" id="t_r0s1" style="left:1546.6px;top:892.28px;font-size:24px;line-height:24px;font-weight:400;color:#e8901a;font-family:'Liberation Sans', sans-serif;transform:scaleX(1.1507);">Set up</span>
<span class="t" id="t_r0s2" style="left:1634.0px;top:892.28px;font-size:24px;line-height:24px;font-weight:400;color:#1f2328;font-family:'Liberation Sans', sans-serif;transform:scaleX(1.1548);">code scanning</span>
<span class="t m" id="t_r0d" style="left:1933.0px;top:894.85px;font-size:22.5px;line-height:22.5px;font-weight:400;color:#111;font-family:'Liberation Mono', monospace;">2024.04.11 15:33:30</span>
<span class="t" id="t_r0in" style="left:2199.0px;top:892.28px;font-size:24px;line-height:24px;font-weight:400;color:#1f2328;font-family:'Liberation Sans', sans-serif;transform:scaleX(1.1579);">in</span>
<span class="t" id="t_r0e" style="left:2228.0px;top:892.28px;font-size:24px;line-height:24px;font-weight:400;color:#e8901a;font-family:'Liberation Sans', sans-serif;transform:scaleX(1.1136);">Test</span>
<span class="t" id="t_r1c" style="left:213.0px;top:988.28px;font-size:24px;line-height:24px;font-weight:400;color:#2a2c30;font-family:'Liberation Sans', sans-serif;transform:scaleX(1.1338);">Cafe Locator Config</span>
<span class="t" id="t_r1n" style="left:494.0px;top:988.28px;font-size:24px;line-height:24px;font-weight:700;color:#1a1a1a;font-family:'Liberation Sans', sans-serif;transform:scaleX(1.1292);">Preferred Cafe Type</span>
<span class="t m" id="t_r1k" style="left:785.5px;top:990.85px;font-size:22.5px;line-height:22.5px;font-weight:400;color:#2a2d33;font-family:'Liberation Mono', monospace;">preferredCafeType</span>
<span class="t" id="t_r1tg" style="left:1296.0px;top:989.05px;font-size:22.5px;line-height:22.5px;font-weight:400;color:#939393;font-family:'Liberation Sans', sans-serif;transform:scaleX(1.1516);">tag</span>
<span class="t" id="t_r1s1" style="left:1546.6px;top:988.28px;font-size:24px;line-height:24px;font-weight:400;color:#e8901a;font-family:'Liberation Sans', sans-serif;transform:scaleX(1.1507);">Set up</span>
<span class="t" id="t_r1s2" style="left:1634.0px;top:988.28px;font-size:24px;line-height:24px;font-weight:400;color:#1f2328;font-family:'Liberation Sans', sans-serif;transform:scaleX(1.1548);">code scanning</span>
<span class="t m" id="t_r1d" style="left:1933.0px;top:990.85px;font-size:22.5px;line-height:22.5px;font-weight:400;color:#111;font-family:'Liberation Mono', monospace;">2024.01.25 14:32:45</span>
<span class="t" id="t_r1in" style="left:2199.0px;top:988.28px;font-size:24px;line-height:24px;font-weight:400;color:#1f2328;font-family:'Liberation Sans', sans-serif;transform:scaleX(1.1579);">in</span>
<span class="t" id="t_r1e" style="left:2228.0px;top:988.28px;font-size:24px;line-height:24px;font-weight:400;color:#e8901a;font-family:'Liberation Sans', sans-serif;transform:scaleX(1.1136);">Test</span>
<span class="t" id="t_r2c" style="left:213.0px;top:1084.28px;font-size:24px;line-height:24px;font-weight:400;color:#2a2c30;font-family:'Liberation Sans', sans-serif;transform:scaleX(1.1338);">Cafe Locator Config</span>
<span class="t" id="t_r2n" style="left:494.0px;top:1084.28px;font-size:24px;line-height:24px;font-weight:700;color:#1a1a1a;font-family:'Liberation Sans', sans-serif;transform:scaleX(1.1190);">Max Distance</span>
<span class="t m" id="t_r2k" style="left:701.7px;top:1086.85px;font-size:22.5px;line-height:22.5px;font-weight:400;color:#2a2d33;font-family:'Liberation Mono', monospace;">maxDistance</span>
<span class="t" id="t_r2tg" style="left:1296.0px;top:1085.05px;font-size:22.5px;line-height:22.5px;font-weight:400;color:#939393;font-family:'Liberation Sans', sans-serif;transform:scaleX(1.1516);">tag</span>
<span class="t" id="t_r2s1" style="left:1546.6px;top:1084.28px;font-size:24px;line-height:24px;font-weight:400;color:#e8901a;font-family:'Liberation Sans', sans-serif;transform:scaleX(1.1507);">Set up</span>
<span class="t" id="t_r2s2" style="left:1634.0px;top:1084.28px;font-size:24px;line-height:24px;font-weight:400;color:#1f2328;font-family:'Liberation Sans', sans-serif;transform:scaleX(1.1548);">code scanning</span>
<span class="t m" id="t_r2d" style="left:1933.0px;top:1086.85px;font-size:22.5px;line-height:22.5px;font-weight:400;color:#111;font-family:'Liberation Mono', monospace;">2024.01.18 13:13:03</span>
<span class="t" id="t_r2in" style="left:2199.0px;top:1084.28px;font-size:24px;line-height:24px;font-weight:400;color:#1f2328;font-family:'Liberation Sans', sans-serif;transform:scaleX(1.1579);">in</span>
<span class="t" id="t_r2e" style="left:2228.0px;top:1084.28px;font-size:24px;line-height:24px;font-weight:400;color:#e8901a;font-family:'Liberation Sans', sans-serif;transform:scaleX(1.1913);">Production</span>
<span class="t" id="t_r3c" style="left:213.0px;top:1180.28px;font-size:24px;line-height:24px;font-weight:400;color:#2a2c30;font-family:'Liberation Sans', sans-serif;transform:scaleX(1.1338);">Cafe Locator Config</span>
<span class="t" id="t_r3n" style="left:494.0px;top:1180.28px;font-size:24px;line-height:24px;font-weight:700;color:#1a1a1a;font-family:'Liberation Sans', sans-serif;transform:scaleX(1.1129);">Enable Cafe Ratings</span>
<span class="t m" id="t_r3k" style="left:789.6px;top:1182.85px;font-size:22.5px;line-height:22.5px;font-weight:400;color:#2a2d33;font-family:'Liberation Mono', monospace;">enableCafeRatings</span>
<span class="t" id="t_r3tg" style="left:1296.0px;top:1181.05px;font-size:22.5px;line-height:22.5px;font-weight:400;color:#939393;font-family:'Liberation Sans', sans-serif;transform:scaleX(1.1516);">tag</span>
<span class="t" id="t_r3s1" style="left:1546.6px;top:1180.28px;font-size:24px;line-height:24px;font-weight:400;color:#e8901a;font-family:'Liberation Sans', sans-serif;transform:scaleX(1.1507);">Set up</span>
<span class="t" id="t_r3s2" style="left:1634.0px;top:1180.28px;font-size:24px;line-height:24px;font-weight:400;color:#1f2328;font-family:'Liberation Sans', sans-serif;transform:scaleX(1.1548);">code scanning</span>
<span class="t m" id="t_r3d" style="left:1933.0px;top:1182.85px;font-size:22.5px;line-height:22.5px;font-weight:400;color:#111;font-family:'Liberation Mono', monospace;">2025.04.27 23:33:24</span>
<span class="t" id="t_r3in" style="left:2199.0px;top:1180.28px;font-size:24px;line-height:24px;font-weight:400;color:#1f2328;font-family:'Liberation Sans', sans-serif;transform:scaleX(1.1579);">in</span>
<span class="t" id="t_r3e" style="left:2228.0px;top:1180.28px;font-size:24px;line-height:24px;font-weight:400;color:#e8901a;font-family:'Liberation Sans', sans-serif;transform:scaleX(1.1136);">Test</span>
<span class="t" id="t_r4c" style="left:213.0px;top:1276.28px;font-size:24px;line-height:24px;font-weight:400;color:#2a2c30;font-family:'Liberation Sans', sans-serif;transform:scaleX(1.1490);">Park Finder Config</span>
<span class="t" id="t_r4n" style="left:494.0px;top:1276.28px;font-size:24px;line-height:24px;font-weight:700;color:#1a1a1a;font-family:'Liberation Sans', sans-serif;transform:scaleX(1.1167);">Enable Park Suggestions</span>
<span class="t m" id="t_r4k" style="left:851.2px;top:1278.85px;font-size:22.5px;line-height:22.5px;font-weight:400;color:#2a2d33;font-family:'Liberation Mono', monospace;">enableParkSuggestions</span>
<span class="t" id="t_r4tg" style="left:1296.0px;top:1277.05px;font-size:22.5px;line-height:22.5px;font-weight:400;color:#939393;font-family:'Liberation Sans', sans-serif;transform:scaleX(1.1516);">tag</span>
<span class="t" id="t_r4s1" style="left:1546.6px;top:1276.28px;font-size:24px;line-height:24px;font-weight:400;color:#e8901a;font-family:'Liberation Sans', sans-serif;transform:scaleX(1.1507);">Set up</span>
<span class="t" id="t_r4s2" style="left:1634.0px;top:1276.28px;font-size:24px;line-height:24px;font-weight:400;color:#1f2328;font-family:'Liberation Sans', sans-serif;transform:scaleX(1.1548);">code scanning</span>
<span class="t m" id="t_r4d" style="left:1933.0px;top:1278.85px;font-size:22.5px;line-height:22.5px;font-weight:400;color:#111;font-family:'Liberation Mono', monospace;">2024.04.11 15:27:54</span>
<span class="t" id="t_r4in" style="left:2199.0px;top:1276.28px;font-size:24px;line-height:24px;font-weight:400;color:#1f2328;font-family:'Liberation Sans', sans-serif;transform:scaleX(1.1579);">in</span>
<span class="t" id="t_r4e" style="left:2228.0px;top:1276.28px;font-size:24px;line-height:24px;font-weight:400;color:#e8901a;font-family:'Liberation Sans', sans-serif;transform:scaleX(1.1136);">Test</span>
<span class="t" id="t_r5c" style="left:213.0px;top:1372.28px;font-size:24px;line-height:24px;font-weight:400;color:#2a2c30;font-family:'Liberation Sans', sans-serif;transform:scaleX(1.1490);">Park Finder Config</span>
<span class="t" id="t_r5n" style="left:494.0px;top:1372.28px;font-size:24px;line-height:24px;font-weight:700;color:#1a1a1a;font-family:'Liberation Sans', sans-serif;transform:scaleX(1.1151);">Park Features</span>
<span class="t m" id="t_r5k" style="left:707.8px;top:1374.85px;font-size:22.5px;line-height:22.5px;font-weight:400;color:#2a2d33;font-family:'Liberation Mono', monospace;">parkFeatures</span>
<span class="t" id="t_r5tg" style="left:1296.0px;top:1373.05px;font-size:22.5px;line-height:22.5px;font-weight:400;color:#939393;font-family:'Liberation Sans', sans-serif;transform:scaleX(1.1516);">tag</span>
<span class="t" id="t_r5s1" style="left:1546.6px;top:1372.28px;font-size:24px;line-height:24px;font-weight:400;color:#e8901a;font-family:'Liberation Sans', sans-serif;transform:scaleX(1.1507);">Set up</span>
<span class="t" id="t_r5s2" style="left:1634.0px;top:1372.28px;font-size:24px;line-height:24px;font-weight:400;color:#1f2328;font-family:'Liberation Sans', sans-serif;transform:scaleX(1.1548);">code scanning</span>
<span class="t m" id="t_r5d" style="left:1933.0px;top:1374.85px;font-size:22.5px;line-height:22.5px;font-weight:400;color:#111;font-family:'Liberation Mono', monospace;">2024.01.18 13:16:13</span>
<span class="t" id="t_r5in" style="left:2199.0px;top:1372.28px;font-size:24px;line-height:24px;font-weight:400;color:#1f2328;font-family:'Liberation Sans', sans-serif;transform:scaleX(1.1579);">in</span>
<span class="t" id="t_r5e" style="left:2228.0px;top:1372.28px;font-size:24px;line-height:24px;font-weight:400;color:#e8901a;font-family:'Liberation Sans', sans-serif;transform:scaleX(1.1913);">Production</span>
<span class="t" id="t_r6c" style="left:213.0px;top:1468.28px;font-size:24px;line-height:24px;font-weight:400;color:#2a2c30;font-family:'Liberation Sans', sans-serif;transform:scaleX(1.1490);">Park Finder Config</span>
<span class="t" id="t_r6n" style="left:494.0px;top:1468.28px;font-size:24px;line-height:24px;font-weight:700;color:#1a1a1a;font-family:'Liberation Sans', sans-serif;transform:scaleX(1.1340);">Update Frequency</span>
<span class="t m" id="t_r6k" style="left:768.0px;top:1470.85px;font-size:22.5px;line-height:22.5px;font-weight:400;color:#2a2d33;font-family:'Liberation Mono', monospace;">updateFrequency</span>
<span class="t" id="t_r6tg" style="left:1296.0px;top:1469.05px;font-size:22.5px;line-height:22.5px;font-weight:400;color:#939393;font-family:'Liberation Sans', sans-serif;transform:scaleX(1.1516);">tag</span>
<span class="t" id="t_r6s1" style="left:1546.6px;top:1468.28px;font-size:24px;line-height:24px;font-weight:400;color:#e8901a;font-family:'Liberation Sans', sans-serif;transform:scaleX(1.1507);">Set up</span>
<span class="t" id="t_r6s2" style="left:1634.0px;top:1468.28px;font-size:24px;line-height:24px;font-weight:400;color:#1f2328;font-family:'Liberation Sans', sans-serif;transform:scaleX(1.1548);">code scanning</span>
<span class="t m" id="t_r6d" style="left:1933.0px;top:1470.85px;font-size:22.5px;line-height:22.5px;font-weight:400;color:#111;font-family:'Liberation Mono', monospace;">2024.01.18 13:16:56</span>
<span class="t" id="t_r6in" style="left:2199.0px;top:1468.28px;font-size:24px;line-height:24px;font-weight:400;color:#1f2328;font-family:'Liberation Sans', sans-serif;transform:scaleX(1.1579);">in</span>
<span class="t" id="t_r6e" style="left:2228.0px;top:1468.28px;font-size:24px;line-height:24px;font-weight:400;color:#e8901a;font-family:'Liberation Sans', sans-serif;transform:scaleX(1.1913);">Production</span>
<span class="t" id="t_r7c" style="left:213.0px;top:1564.28px;font-size:24px;line-height:24px;font-weight:400;color:#2a2c30;font-family:'Liberation Sans', sans-serif;transform:scaleX(1.1490);">Park Finder Config</span>
<span class="t" id="t_r7n" style="left:494.0px;top:1564.28px;font-size:24px;line-height:24px;font-weight:700;color:#1a1a1a;font-family:'Liberation Sans', sans-serif;transform:scaleX(1.2258);">Suggestion Radius</span>
<span class="t m" id="t_r7k" style="left:796.0px;top:1566.85px;font-size:22.5px;line-height:22.5px;font-weight:400;color:#2a2d33;font-family:'Liberation Mono', monospace;">suggestionRadius</span>
<span class="t" id="t_r7tg" style="left:1296.0px;top:1565.05px;font-size:22.5px;line-height:22.5px;font-weight:400;color:#939393;font-family:'Liberation Sans', sans-serif;transform:scaleX(1.1516);">tag</span>
<span class="t" id="t_r7s1" style="left:1546.6px;top:1564.28px;font-size:24px;line-height:24px;font-weight:400;color:#e8901a;font-family:'Liberation Sans', sans-serif;transform:scaleX(1.1507);">Set up</span>
<span class="t" id="t_r7s2" style="left:1634.0px;top:1564.28px;font-size:24px;line-height:24px;font-weight:400;color:#1f2328;font-family:'Liberation Sans', sans-serif;transform:scaleX(1.1548);">code scanning</span>
<span class="t m" id="t_r7d" style="left:1933.0px;top:1566.85px;font-size:22.5px;line-height:22.5px;font-weight:400;color:#111;font-family:'Liberation Mono', monospace;">2024.01.18 13:17:10</span>
<span class="t" id="t_r7in" style="left:2199.0px;top:1564.28px;font-size:24px;line-height:24px;font-weight:400;color:#1f2328;font-family:'Liberation Sans', sans-serif;transform:scaleX(1.1579);">in</span>
<span class="t" id="t_r7e" style="left:2228.0px;top:1564.28px;font-size:24px;line-height:24px;font-weight:400;color:#e8901a;font-family:'Liberation Sans', sans-serif;transform:scaleX(1.1913);">Production</span>
<span class="t" id="t_ff" style="left:47.5px;top:164.84px;font-size:27px;line-height:27px;font-weight:400;color:#0e1114;font-family:'Liberation Sans', sans-serif;transform:scaleX(1.0000);">FF</span>
<span class="t" id="t_wh" style="left:41.0px;top:268.84px;font-size:27px;line-height:27px;font-weight:400;color:#0e1114;font-family:'Liberation Sans', sans-serif;transform:scaleX(1.0222);">WH</span>
</body></html>
